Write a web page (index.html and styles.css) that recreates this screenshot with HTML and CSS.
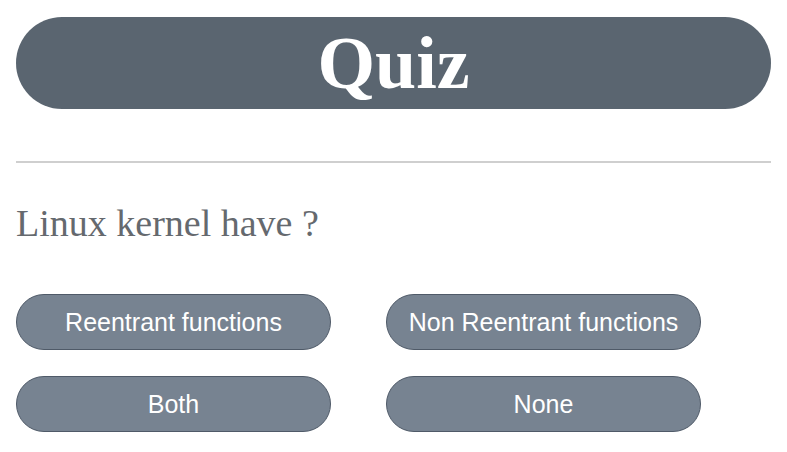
FILE: index.html
```html
<!DOCTYPE html>
<html lang="en">
<head>
<meta charset="utf-8">
<title>Quiz</title>
<link rel="stylesheet" href="styles.css">
</head>
<body>
<div class="page">
  <h1 class="title">Quiz</h1>
  <hr class="divider">
  <p class="question">Linux kernel have ?</p>
  <div class="options">
    <button class="option">Reentrant functions</button>
    <button class="option">Non Reentrant functions</button>
    <button class="option">Both</button>
    <button class="option">None</button>
  </div>
</div>
</body>
</html>
```
FILE: styles.css
```css
html, body {
  margin: 0;
  padding: 0;
  background: #ffffff;
}
.page {
  padding: 17px 16px 0 16px;
}
.title {
  margin: 0;
  height: 92px;
  border-radius: 46px;
  background: #5a6570;
  color: #ffffff;
  font-family: "Liberation Serif", serif;
  font-weight: bold;
  font-size: 74px;
  line-height: 92px;
  text-align: center;
}
.divider {
  margin: 52px 0 0 0;
  border: none;
  border-top: 2px solid #cfcfcf;
  height: 0;
}
.question {
  margin: 39px 0 0 0;
  font-family: "Liberation Serif", serif;
  font-size: 38px;
  line-height: 42px;
  color: #65696e;
}
.options {
  margin-top: 50px;
  display: grid;
  grid-template-columns: 315px 315px;
  column-gap: 55px;
  row-gap: 26px;
}
.option {
  height: 56px;
  border-radius: 28px;
  border: 1px solid #4f5a68;
  background: #778391;
  color: #ffffff;
  font-family: "Liberation Sans", Arial, sans-serif;
  font-size: 25px;
  padding: 0;
  display: flex;
  align-items: center;
  justify-content: center;
}
```
